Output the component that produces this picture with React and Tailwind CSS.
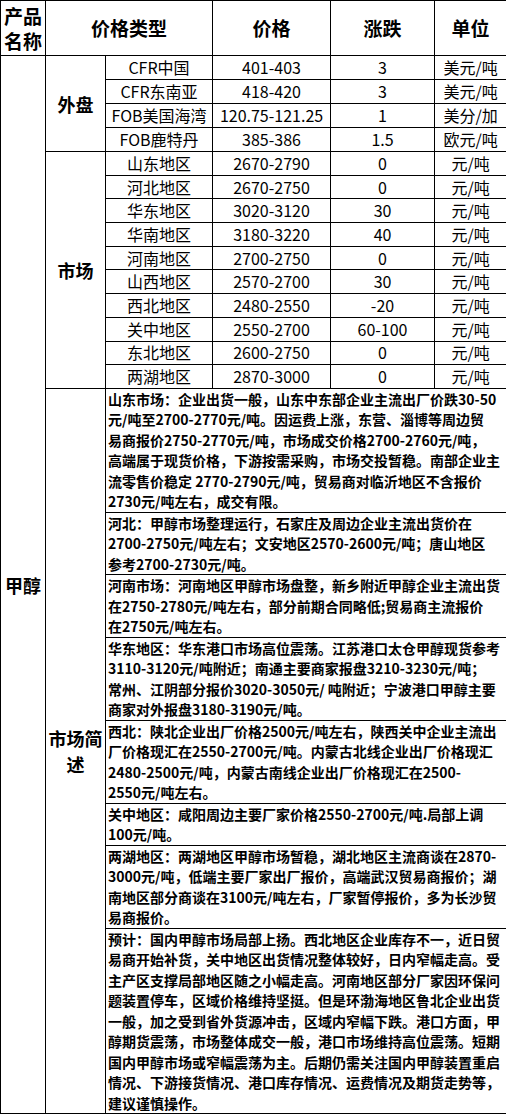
import React from 'react'

const outer = [
    ['CFR中国', '401-403', '3', '美元/吨'],
    ['CFR东南亚', '418-420', '3', '美元/吨'],
    ['FOB美国海湾', '120.75-121.25', '1', '美分/加'],
    ['FOB鹿特丹', '385-386', '1.5', '欧元/吨'],
]

const market = [
    ['山东地区', '2670-2790', '0'],
    ['河北地区', '2670-2750', '0'],
    ['华东地区', '3020-3120', '30'],
    ['华南地区', '3180-3220', '40'],
    ['河南地区', '2700-2750', '0'],
    ['山西地区', '2570-2700', '30'],
    ['西北地区', '2480-2550', '-20'],
    ['关中地区', '2550-2700', '60-100'],
    ['东北地区', '2600-2750', '0'],
    ['两湖地区', '2870-3000', '0'],
]

// each paragraph keeps the reference's own line breaks
const notes = [
    [
        '山东市场：企业出货一般，山东中东部企业主流出厂价跌30-50',
        '元/吨至2700-2770元/吨。因运费上涨，东营、淄博等周边贸',
        '易商报价2750-2770元/吨，市场成交价格2700-2760元/吨，',
        '高端属于现货价格，下游按需采购，市场交投暂稳。南部企业主',
        '流零售价稳定 2770-2790元/吨，贸易商对临沂地区不含报价',
        '2730元/吨左右，成交有限。',
    ],
    [
        '河北：甲醇市场整理运行，石家庄及周边企业主流出货价在',
        '2700-2750元/吨左右；文安地区2570-2600元/吨；唐山地区',
        '参考2700-2730元/吨。',
    ],
    [
        '河南市场：河南地区甲醇市场盘整，新乡附近甲醇企业主流出货',
        '在2750-2780元/吨左右，部分前期合同略低;贸易商主流报价',
        '在2750元/吨左右。',
    ],
    [
        '华东地区：华东港口市场高位震荡。江苏港口太仓甲醇现货参考',
        '3110-3120元/吨附近；南通主要商家报盘3210-3230元/吨；',
        '常州、江阴部分报价3020-3050元/ 吨附近；宁波港口甲醇主要',
        '商家对外报盘3180-3190元/吨。',
    ],
    [
        '西北：陕北企业出厂价格2500元/吨左右，陕西关中企业主流出',
        '厂价格现汇在2550-2700元/吨。内蒙古北线企业出厂价格现汇',
        '2480-2500元/吨，内蒙古南线企业出厂价格现汇在2500-',
        '2550元/吨左右。',
    ],
    [
        '关中地区：咸阳周边主要厂家价格2550-2700元/吨.局部上调',
        '100元/吨。',
    ],
    [
        '两湖地区：两湖地区甲醇市场暂稳，湖北地区主流商谈在2870-',
        '3000元/吨，低端主要厂家出厂报价，高端武汉贸易商报价；湖',
        '南地区部分商谈在3100元/吨左右，厂家暂停报价，多为长沙贸',
        '易商报价。',
    ],
    [
        '预计：国内甲醇市场局部上扬。西北地区企业库存不一，近日贸',
        '易商开始补货，关中地区出货情况整体较好，日内窄幅走高。受',
        '主产区支撑局部地区随之小幅走高。河南地区部分厂家因环保问',
        '题装置停车，区域价格维持坚挺。但是环渤海地区鲁北企业出货',
        '一般，加之受到省外货源冲击，区域内窄幅下跌。港口方面，甲',
        '醇期货震荡，市场整体成交一般，港口市场维持高位震荡。短期',
        '国内甲醇市场或窄幅震荡为主。后期仍需关注国内甲醇装置重启',
        '情况、下游接货情况、港口库存情况、运费情况及期货走势等，',
        '建议谨慎操作。',
    ],
]

const cell = 'border border-black text-center align-middle p-0'
const label = 'border border-black text-center align-middle p-0 text-[18px] font-bold leading-[26px]'

export default function App() {
    const totalRows = outer.length + market.length + notes.length

    return (
        <div className="bg-white w-[506px] text-black" style={{ fontFamily: '"Noto Sans CJK SC", "Noto Sans", sans-serif' }}>
            <table className="w-[506px] table-fixed border-collapse">
                <colgroup>
                    <col className="w-[45px]" />
                    <col className="w-[60px]" />
                    <col className="w-[107px]" />
                    <col className="w-[118px]" />
                    <col className="w-[104px]" />
                    <col className="w-[72px]" />
                </colgroup>
                <tbody>
                    {/* header */}
                    <tr className="h-[55px] text-[19px] font-bold">
                        <td className={`${cell} leading-[25px]`}>产品<br />名称</td>
                        <td colSpan={2} className={cell}>价格类型</td>
                        <td className={cell}>价格</td>
                        <td className={cell}>涨跌</td>
                        <td className={cell}>单位</td>
                    </tr>

                    {outer.map((r, i) => (
                        <tr key={r[0]} className="h-[24px] text-[16px] leading-[21px]">
                            {i === 0 && <td rowSpan={totalRows} className={label}>甲醇</td>}
                            {i === 0 && <td rowSpan={outer.length} className={label}>外盘</td>}
                            <td className={`${cell} whitespace-nowrap`}>{r[0]}</td>
                            <td className={cell}>{r[1]}</td>
                            <td className={cell}>{r[2]}</td>
                            <td className={cell}>{r[3]}</td>
                        </tr>
                    ))}

                    {market.map((r, i) => (
                        <tr key={r[0]} className="h-[23.7px] text-[16px] leading-[21px]">
                            {i === 0 && <td rowSpan={market.length} className={label}>市场</td>}
                            <td className={cell}>{r[0]}</td>
                            <td className={cell}>{r[1]}</td>
                            <td className={cell}>{r[2]}</td>
                            <td className={cell}>元/吨</td>
                        </tr>
                    ))}

                    {notes.map((lines, i) => (
                        <tr key={i}>
                            {i === 0 && <td rowSpan={notes.length} className={label}>市场简述</td>}
                            <td colSpan={4} className="border border-black p-0 pl-[2px] text-left text-[14px] font-bold leading-[20.5px]">
                                {lines.map((l) => (
                                    <div key={l} className="whitespace-nowrap">{l}</div>
                                ))}
                            </td>
                        </tr>
                    ))}
                </tbody>
            </table>
        </div>
    )
}
